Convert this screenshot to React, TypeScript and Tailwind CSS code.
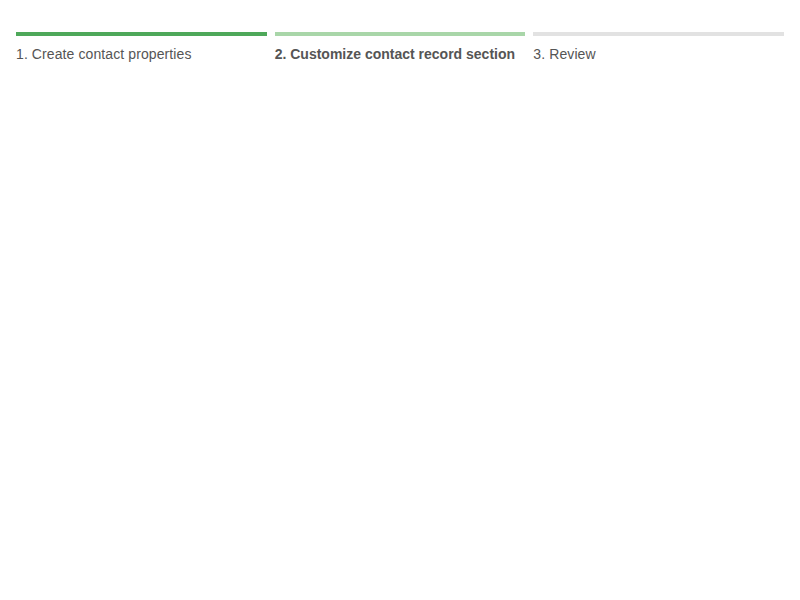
import React from "react";

const steps = [
  { label: "1. Create contact properties", bar: "bg-[#4ea85a]", bold: false },
  { label: "2. Customize contact record section", bar: "bg-[#a9d6a9]", bold: true },
  { label: "3. Review", bar: "bg-[#e2e2e2]", bold: false },
];

export default function App() {
  return (
    <div className="w-[800px] h-[600px] bg-white px-4 pt-8" style={{ fontFamily: '"Liberation Sans", Arial, sans-serif' }}>
      <div className="grid grid-cols-3 gap-2">
        {steps.map((s) => (
          <div key={s.label} className="flex flex-col">
            <div className={`h-1 ${s.bar}`} />
            <div className={`mt-2 text-[14px] leading-5 text-[#555555] ${s.bold ? "font-bold" : "tracking-[0.1px]"}`}>{s.label}</div>
          </div>
        ))}
      </div>
    </div>
  );
}
